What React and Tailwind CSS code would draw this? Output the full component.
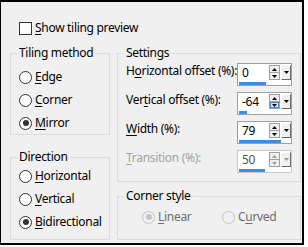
import React from "react";

function U({ children }) {
  return <span className="underline underline-offset-[2px]">{children}</span>;
}

function Radio({ checked, disabled, children }) {
  return (
    <div className="flex items-center gap-[3px] h-[16px]">
      <span
        className={
          disabled
            ? "w-[13px] h-[13px] rounded-full border border-[#c4c4c4] bg-[#f0f0f0] flex items-center justify-center"
            : "w-[13px] h-[13px] rounded-full border border-[#333333] bg-white flex items-center justify-center"
        }
      >
        {checked && (
          <span
            className={
              disabled
                ? "w-[6px] h-[6px] rounded-full bg-[#c4c4c4]"
                : "w-[6px] h-[6px] rounded-full bg-[#333333]"
            }
          />
        )}
      </span>
      <span className={disabled ? "text-[#6d6d6d]" : ""}>{children}</span>
    </div>
  );
}

function Tri({ up, color }) {
  return (
    <svg width="5" height="3" viewBox="0 0 5 3">
      {up ? (
        <polygon points="0,3 5,3 2.5,0" fill={color} />
      ) : (
        <polygon points="0,0 5,0 2.5,3" fill={color} />
      )}
    </svg>
  );
}

function Spin({ value, barClass, disabled, hot }) {
  const tc = disabled ? "#9a9a9a" : "#000000";
  return (
    <div
      className={
        disabled
          ? "w-[55px] h-[23px] border border-[#c8c8c8] bg-white flex flex-col"
          : "w-[55px] h-[23px] border border-[#a0a0a0] bg-white flex flex-col"
      }
    >
      <div className="flex items-start pt-[1px] h-[17px]">
        <span className={disabled ? "w-[31px] pl-[4px] leading-[16px] text-[#555555]" : "w-[31px] pl-[4px] leading-[16px]"}>
          {value}
        </span>
        <div className="flex flex-col w-[11px] h-[15px] border border-[#a0a0a0] bg-[#f0f0f0]">
          <div className="h-[7px] flex items-center justify-center border-b border-[#a0a0a0]">
            <Tri up color={tc} />
          </div>
          <div
            className={
              hot
                ? "flex-1 flex items-center justify-center bg-[#d8eaf9] border border-[#3c8de6]"
                : "flex-1 flex items-center justify-center"
            }
          >
            <Tri color={tc} />
          </div>
        </div>
        <div className="ml-[1px] w-[10px] h-[15px] bg-[#f0f0f0] border-r border-b border-[#696969] border-l border-t border-l-[#ffffff] border-t-[#ffffff] flex items-center justify-center">
          <Tri color={tc} />
        </div>
      </div>
      <div className={"h-[3px] mt-[1px] ml-[1px] bg-[#3c8de6] " + barClass} />
    </div>
  );
}

function Row({ label, disabled, children }) {
  return (
    <div className="flex items-start h-[23px]">
      <span className={disabled ? "w-[111px] whitespace-nowrap leading-[16px] text-[#a3a3a3]" : "w-[111px] whitespace-nowrap leading-[16px]"}>
        {label}
      </span>
      {children}
    </div>
  );
}

export default function App() {
  return (
    <div className="w-[308px] h-[247px] bg-white">
      <div className="w-[304px] h-[245px] border-t-2 border-l border-r-2 border-b-2 border-black bg-[#f0f0f0] font-['Noto_Sans',sans-serif] text-[12px] tracking-[-0.3px] leading-[16px] text-black">
        <div className="flex items-center gap-[3px] pl-[18px] pt-[18px] h-[34px]">
          <span className="w-[13px] h-[13px] border border-[#333333] bg-white" />
          <span>
            <U>S</U>how tiling preview
          </span>
        </div>
        <div className="flex gap-[7px] pl-[9px] mt-[9px]">
          <div className="flex flex-col w-[100px] gap-[14px]">
            <fieldset className="min-w-0 border border-[#dcdcdc] h-[90px]">
              <legend className="ml-[6px] px-[2px]">Tiling method</legend>
              <div className="flex flex-col gap-[7px] pt-[8px] pl-[8px]">
                <Radio>
                  <U>E</U>dge
                </Radio>
                <Radio>
                  <U>C</U>orner
                </Radio>
                <Radio checked>
                  <U>M</U>irror
                </Radio>
              </div>
            </fieldset>
            <fieldset className="min-w-0 border border-[#dcdcdc] h-[91px]">
              <legend className="ml-[6px] px-[2px]">Direction</legend>
              <div className="flex flex-col gap-[7px] pt-[3px] pl-[8px]">
                <Radio>
                  <U>H</U>orizontal
                </Radio>
                <Radio>
                  <U>V</U>ertical
                </Radio>
                <Radio checked>
                  <U>B</U>idirectional
                </Radio>
              </div>
            </fieldset>
          </div>
          <div className="flex flex-col w-[184px] gap-[6px]">
            <fieldset className="min-w-0 border border-[#dcdcdc] h-[137px]">
              <legend className="ml-[6px] px-[2px]">Settings</legend>
              <div className="flex flex-col gap-[6px] pt-[2px] pl-[8px]">
                <Row
                  label={
                    <>
                      H<U>o</U>rizontal offset (%):
                    </>
                  }
                >
                  <Spin value="0" barClass="w-[27px]" />
                </Row>
                <Row
                  label={
                    <>
                      Ver<U>t</U>ical offset (%):
                    </>
                  }
                >
                  <Spin value="-64" barClass="w-[8px]" hot />
                </Row>
                <Row
                  label={
                    <>
                      <U>W</U>idth (%):
                    </>
                  }
                >
                  <Spin value="79" barClass="w-[42px]" />
                </Row>
                <Row
                  disabled
                  label={
                    <>
                      <U>T</U>ransition (%):
                    </>
                  }
                >
                  <Spin value="50" barClass="w-[26px]" disabled />
                </Row>
              </div>
            </fieldset>
            <fieldset className="min-w-0 border border-[#dcdcdc] h-[52px]">
              <legend className="ml-[6px] px-[2px]">Corner style</legend>
              <div className="flex pt-[5px] pl-[24px]">
                <div className="w-[80px]">
                  <Radio checked disabled>
                    <U>L</U>inear
                  </Radio>
                </div>
                <Radio disabled>
                  C<U>u</U>rved
                </Radio>
              </div>
            </fieldset>
          </div>
        </div>
      </div>
    </div>
  );
}
